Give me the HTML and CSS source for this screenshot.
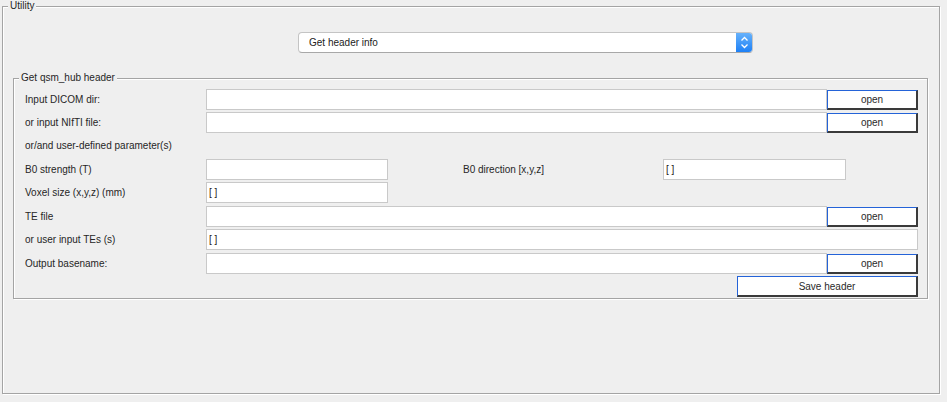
FILE: index.html
```html
<!DOCTYPE html>
<html>
<head>
<meta charset="utf-8">
<link rel="stylesheet" href="styles.css">
</head>
<body>
<div class="outer">
  <span class="title">Utility</span>
  <div class="popup">
    <span class="popup-text">Get header info</span>
    <span class="stepper">
      <svg width="17" height="21" viewBox="0 0 17 21">
        <path d="M5.5 8.5 L8.5 5.5 L11.5 8.5" fill="none" stroke="#fff" stroke-width="1.3"/>
        <path d="M5.5 12.5 L8.5 15.5 L11.5 12.5" fill="none" stroke="#fff" stroke-width="1.3"/>
      </svg>
    </span>
  </div>
  <div class="inner">
    <span class="title">Get qsm_hub header</span>
    <div class="row r1">
      <span class="lbl">Input DICOM dir:</span>
      <div class="field wide"></div>
      <button class="btn open">open</button>
    </div>
    <div class="row r2">
      <span class="lbl">or input NIfTI file:</span>
      <div class="field wide"></div>
      <button class="btn open">open</button>
    </div>
    <div class="row r3">
      <span class="lbl full">or/and user-defined parameter(s)</span>
    </div>
    <div class="row r4">
      <span class="lbl">B0 strength (T)</span>
      <div class="field short"></div>
      <span class="lbl dir">B0 direction [x,y,z]</span>
      <div class="field short2">[ ]</div>
    </div>
    <div class="row r5">
      <span class="lbl">Voxel size (x,y,z) (mm)</span>
      <div class="field short">[ ]</div>
    </div>
    <div class="row r6">
      <span class="lbl">TE file</span>
      <div class="field wide"></div>
      <button class="btn open">open</button>
    </div>
    <div class="row r7">
      <span class="lbl">or user input TEs (s)</span>
      <div class="field full-field">[ ]</div>
    </div>
    <div class="row r8">
      <span class="lbl">Output basename:</span>
      <div class="field wide"></div>
      <button class="btn open">open</button>
    </div>
    <div class="row r9">
      <button class="btn save">Save header</button>
    </div>
  </div>
</div>
</body>
</html>
```
FILE: styles.css
```css
html, body {
  margin: 0;
  padding: 0;
}
body {
  background: #efefef;
  font: 10px "Liberation Sans", Arial, Helvetica, sans-serif;
  color: #262626;
  width: 947px;
  height: 402px;
  overflow: hidden;
}
.outer {
  position: relative;
  margin: 6px 0 0 2px;
  width: 938px;
  height: 388px;
  box-sizing: border-box;
  border: 1px solid #a4a4a4;
  box-shadow: inset 1px 1px 0 #fff, 1px 1px 0 #fff;
  padding-top: 25px;
}
.title {
  position: absolute;
  top: -7px;
  left: 5px;
  padding: 0 2px;
  line-height: 12px;
  background: #efefef;
  color: #262626;
}
.popup {
  margin-left: 295px;
  width: 455px;
  height: 21px;
  box-sizing: border-box;
  background: #fff;
  border: 1px solid #c4c4c4;
  border-bottom-color: #a8a8a8;
  border-radius: 4px;
  display: flex;
  align-items: center;
  overflow: hidden;
}
.popup-text {
  flex: 1;
  padding-left: 10px;
  color: #222;
}
.stepper {
  width: 17px;
  height: 21px;
  margin-right: -1px;
  background: linear-gradient(#6ab4fb, #1a7ef6);
  display: flex;
}
.inner {
  position: relative;
  margin: 25px 0 0 10px;
  width: 915px;
  height: 221px;
  box-sizing: border-box;
  border: 1px solid #a4a4a4;
  box-shadow: inset 1px 1px 0 #fff, 1px 1px 0 #fff;
  padding-top: 10px;
}
.row {
  display: flex;
  align-items: center;
  height: 21px;
  padding-left: 11px;
}
.r2 { margin-top: 2px; }
.r3 { margin-top: 2px; }
.r4 { margin-top: 3px; }
.r5 { margin-top: 2px; }
.r6 { margin-top: 3px; }
.r7 { margin-top: 2px; }
.r8 { margin-top: 3px; }
.r9 { margin-top: 2px; height: 21px; }
.lbl {
  width: 181px;
  flex: none;
  white-space: nowrap;
}
.lbl.full { width: auto; }
.lbl.dir {
  margin-left: 75px;
  width: 200px;
}
.field {
  flex: none;
  height: 21px;
  box-sizing: border-box;
  background: #fff;
  border: 1px solid #c9c9c9;
  padding-left: 2px;
  line-height: 19px;
  color: #222;
}
.wide { width: 621px; }
.short { width: 182px; }
.short2 { width: 183px; }
.full-field { width: 712px; }
.btn {
  flex: none;
  font: inherit;
  color: #2a2a2a;
  background: #fff;
  box-sizing: border-box;
  border-style: solid;
  border-width: 1px 2px 2px 1px;
  border-color: #2463d8 #3a3a3a #3a3a3a #2463d8;
  padding: 0;
  margin: 0;
  text-align: center;
}
.open {
  width: 91px;
  height: 20px;
  align-self: flex-end;
}
.save {
  width: 181px;
  height: 21px;
  margin-left: 712px;
}
```
